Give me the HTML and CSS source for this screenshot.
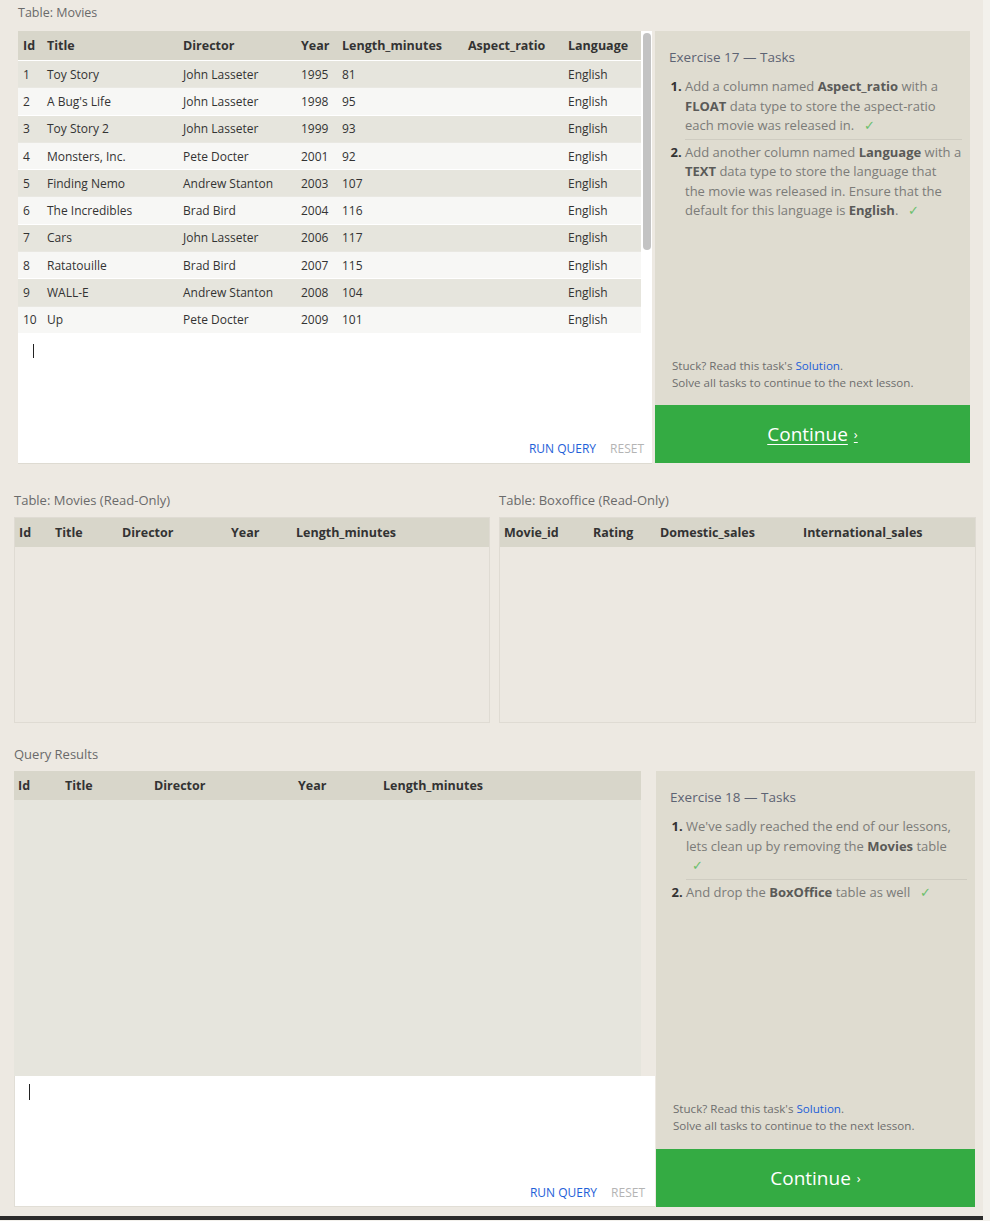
FILE: index.html
```html
<!DOCTYPE html>
<html>
<head>
<meta charset="utf-8">
<link rel="stylesheet" href="styles.css">
</head>
<body>
<div class="page">
  <section class="lesson lesson-top">
    <div class="work">
      <div class="label">Table: Movies</div>
      <div class="box">
        <div class="result-wrap">
          <table class="grid grid-top">
            <colgroup><col style="width:24px"><col style="width:136px"><col style="width:118px"><col style="width:41px"><col style="width:126px"><col style="width:100px"><col style="width:78px"></colgroup>
            <thead><tr><th>Id</th><th>Title</th><th>Director</th><th>Year</th><th>Length_minutes</th><th>Aspect_ratio</th><th>Language</th></tr></thead>
            <tbody>
              <tr><td>1</td><td>Toy Story</td><td>John Lasseter</td><td>1995</td><td>81</td><td></td><td>English</td></tr>
              <tr><td>2</td><td>A Bug's Life</td><td>John Lasseter</td><td>1998</td><td>95</td><td></td><td>English</td></tr>
              <tr><td>3</td><td>Toy Story 2</td><td>John Lasseter</td><td>1999</td><td>93</td><td></td><td>English</td></tr>
              <tr><td>4</td><td>Monsters, Inc.</td><td>Pete Docter</td><td>2001</td><td>92</td><td></td><td>English</td></tr>
              <tr><td>5</td><td>Finding Nemo</td><td>Andrew Stanton</td><td>2003</td><td>107</td><td></td><td>English</td></tr>
              <tr><td>6</td><td>The Incredibles</td><td>Brad Bird</td><td>2004</td><td>116</td><td></td><td>English</td></tr>
              <tr><td>7</td><td>Cars</td><td>John Lasseter</td><td>2006</td><td>117</td><td></td><td>English</td></tr>
              <tr><td>8</td><td>Ratatouille</td><td>Brad Bird</td><td>2007</td><td>115</td><td></td><td>English</td></tr>
              <tr><td>9</td><td>WALL-E</td><td>Andrew Stanton</td><td>2008</td><td>104</td><td></td><td>English</td></tr>
              <tr><td>10</td><td>Up</td><td>Pete Docter</td><td>2009</td><td>101</td><td></td><td>English</td></tr>
            </tbody>
          </table>
          <div class="scrollbar"><div class="thumb"></div></div>
        </div>
        <div class="editor editor-top">
          <span class="cursor"></span>
          <div class="actions"><span class="run">RUN QUERY</span><span class="reset">RESET</span></div>
        </div>
      </div>
    </div>
    <aside class="tasks tasks-top">
      <div class="tasks-body">
        <h2 class="tasks-title">Exercise 17 — Tasks</h2>
        <ol class="task-list">
          <li>Add a column named <b>Aspect_ratio</b> with a <b>FLOAT</b> data type to store the aspect-ratio each movie was released in. <span class="check">✓</span></li>
          <li>Add another column named <b>Language</b> with a <b>TEXT</b> data type to store the language that<br>the movie was released in. Ensure that the default for this language is <b>English</b>. <span class="check">✓</span></li>
        </ol>
        <div class="help">
          <p>Stuck? Read this task's <a>Solution</a>.</p>
          <p>Solve all tasks to continue to the next lesson.</p>
        </div>
      </div>
      <div class="continue continue-link">Continue <span class="chev">›</span></div>
    </aside>
  </section>

  <section class="readonly">
    <div class="ro-col">
      <div class="label">Table: Movies (Read-Only)</div>
      <div class="ro-box">
        <div class="ro-head">
          <span style="width:36px">Id</span><span style="width:67px">Title</span><span style="width:109px">Director</span><span style="width:65px">Year</span><span>Length_minutes</span>
        </div>
      </div>
    </div>
    <div class="ro-col ro-col-right">
      <div class="label">Table: Boxoffice (Read-Only)</div>
      <div class="ro-box">
        <div class="ro-head">
          <span style="width:89px">Movie_id</span><span style="width:67px">Rating</span><span style="width:143px">Domestic_sales</span><span>International_sales</span>
        </div>
      </div>
    </div>
  </section>

  <section class="lesson lesson-bottom">
    <div class="work work-bottom">
      <div class="label">Query Results</div>
      <div class="box box-bottom">
        <div class="qr">
          <div class="ro-head qr-head">
            <span style="width:47px">Id</span><span style="width:89px">Title</span><span style="width:144px">Director</span><span style="width:85px">Year</span><span>Length_minutes</span>
          </div>
        </div>
        <div class="editor editor-bottom">
          <span class="cursor"></span>
          <div class="actions"><span class="run">RUN QUERY</span><span class="reset">RESET</span></div>
        </div>
      </div>
    </div>
    <aside class="tasks tasks-bottom">
      <div class="tasks-body">
        <h2 class="tasks-title">Exercise 18 — Tasks</h2>
        <ol class="task-list">
          <li>We've sadly reached the end of our lessons, lets clean up by removing the <b>Movies</b> table <span class="check">✓</span></li>
          <li>And drop the <b>BoxOffice</b> table as well <span class="check">✓</span></li>
        </ol>
        <div class="help">
          <p>Stuck? Read this task's <a>Solution</a>.</p>
          <p>Solve all tasks to continue to the next lesson.</p>
        </div>
      </div>
      <div class="continue">Continue <span class="chev">›</span></div>
    </aside>
  </section>
  <div class="footer-bar"></div>
</div>
</body>
</html>
```

FILE: styles.css
```css
html { background: #f3f1ec; }
body {
  margin: 0;
  font-family: "Open Sans", "Noto Sans", sans-serif;
  color: #333;
}
.page {
  width: 983px;
  background: #ede9e2;
  overflow: hidden;
}
.label {
  font-size: 13px;
  line-height: 18px;
  color: #6a6a6a;
}

/* top lesson */
.lesson { display: flex; align-items: flex-start; }
.lesson-top { padding-left: 18px; }
.work { width: 634px; }
.lesson-top .label { padding-top: 4px; margin-bottom: 9px; font-size: 12.5px; }
.box {
  background: #fff;
  box-shadow: 0 1px 0 #dedbd2;
}
.result-wrap { display: flex; height: 302px; background: #fff; }
.grid {
  border-collapse: collapse;
  table-layout: fixed;
  width: 623px;
  font-size: 12px;
}
.grid th {
  background: #d8d6ca;
  height: 29px;
  padding: 0 0 0 5px;
  text-align: left;
  font-weight: 700;
  font-size: 12.5px;
  color: #333;
  white-space: nowrap;
}
.grid td {
  height: 26px;
  padding: 0 0 0 5px;
  white-space: nowrap;
  border-top: 1px solid #fff;
  color: #333;
}
.grid tbody tr:nth-child(odd) td { background: #e6e5dd; }
.grid tbody tr:nth-child(even) td { background: #f7f7f5; border-top-color: #e9e8e2; }
.scrollbar { width: 11px; background: #fff; padding: 2px 1px 0 2px; box-sizing: border-box; }
.thumb { height: 217px; background: #c3c3c3; border-radius: 4px; }

.editor { position: relative; background: #fff; }
.editor-top { height: 130px; }
.cursor {
  position: absolute;
  width: 1px;
  height: 14px;
  background: #222;
}
.editor-top .cursor { left: 15px; top: 11px; }
.actions {
  position: absolute;
  right: 8px;
  bottom: 6px;
  display: flex;
  gap: 14px;
  font-size: 12px;
}
.run { color: #1e60d8; }
.reset { color: #b4b4b4; }

/* tasks */
.tasks {
  display: flex;
  flex-direction: column;
  background: #dfdcd0;
}
.tasks-top { width: 315px; margin-left: 3px; margin-top: 31px; height: 432px; }
.tasks-body { flex: 1; display: flex; flex-direction: column; padding: 0 8px 0 14px; }
.tasks-title {
  margin: 17px 0 11px;
  font-size: 13.5px;
  font-weight: 400;
  line-height: 18px;
  color: #5d6373;
}
.task-list {
  margin: 0;
  padding: 0 0 0 16px;
  font-size: 13px;
  line-height: 19.5px;
  color: #7b7b78;
}
.task-list li { padding: 0 0 3px 0; }
.task-list li + li { border-top: 1px solid #cfccc1; padding-top: 3px; }
.task-list li::marker { color: #333; font-weight: 700; }
.task-list b { color: #5a5a58; }
.check { color: #6cbf6c; margin-left: 6px; }
.help { margin-top: auto; padding: 0 0 14px 3px; font-size: 11.6px; line-height: 17px; color: #6e6e6e; }
.help p { margin: 0; }
.help a { color: #1e60d8; }
.continue {
  height: 58px;
  display: flex;
  align-items: center;
  justify-content: center;
  background: #34ab43;
  color: #fff;
  font-size: 19px;
}
.continue-link { text-decoration: underline; text-underline-offset: 3px; }
.chev { font-size: 13px; margin-left: 6px; }

/* read only */
.readonly { display: flex; gap: 9px; padding-left: 14px; margin-top: 28px; }
.ro-col { width: 476px; }
.ro-col-right { width: 477px; }
.readonly .label { margin-bottom: 8px; }
.ro-box {
  height: 204px;
  border: 1px solid #dfdbd3;
  background: #ece8e1;
}
.ro-head {
  display: flex;
  align-items: center;
  height: 29px;
  padding-left: 4px;
  background: #d8d6ca;
  font-size: 12.5px;
  font-weight: 700;
  white-space: nowrap;
}
.ro-head span { display: block; flex: none; }

/* bottom */
.lesson-bottom { padding-left: 14px; margin-top: 22px; }
.work-bottom { width: 627px; }
.lesson-bottom .label { margin-bottom: 8px; }
.box-bottom { height: 436px; display: flex; flex-direction: column; background: transparent; box-shadow: none; }
.qr { height: 305px; background: #e6e5dd; }
.qr-head { height: 29px; }
.editor-bottom { flex: 1; margin-right: -14px; border-left: 1px solid #e1ded6; border-bottom: 1px solid #e1ded6; }
.editor-bottom .cursor { left: 14px; top: 8px; height: 16px; }
.editor-bottom .actions { right: 10px; bottom: 5px; }
.tasks-bottom { width: 319px; margin-left: 15px; margin-top: 26px; height: 436px; }
.tasks-bottom .help { padding-bottom: 15px; }
.footer-bar { height: 4px; margin-top: 9px; background: #2b2b2b; }
```
